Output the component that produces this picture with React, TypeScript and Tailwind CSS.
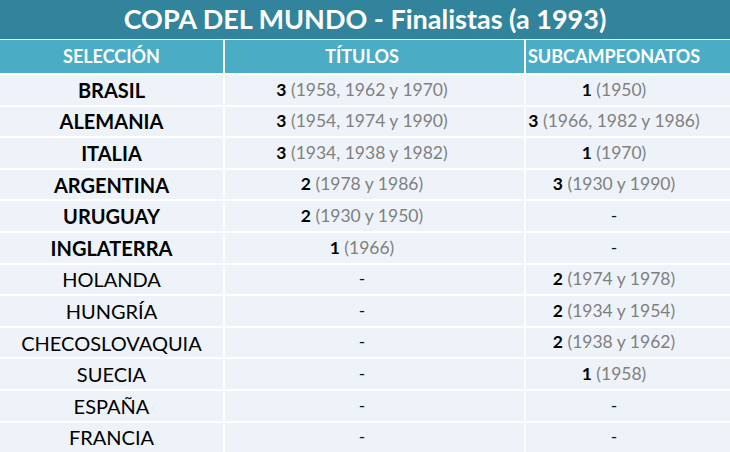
const rows: { name: string; bold: boolean; t: [string, string] | null; s: [string, string] | null }[] = [
  { name: "BRASIL", bold: true, t: ["3", "(1958, 1962 y 1970)"], s: ["1", "(1950)"] },
  { name: "ALEMANIA", bold: true, t: ["3", "(1954, 1974 y 1990)"], s: ["3", "(1966, 1982 y 1986)"] },
  { name: "ITALIA", bold: true, t: ["3", "(1934, 1938 y 1982)"], s: ["1", "(1970)"] },
  { name: "ARGENTINA", bold: true, t: ["2", "(1978 y 1986)"], s: ["3", "(1930 y 1990)"] },
  { name: "URUGUAY", bold: true, t: ["2", "(1930 y 1950)"], s: null },
  { name: "INGLATERRA", bold: true, t: ["1", "(1966)"], s: null },
  { name: "HOLANDA", bold: false, t: null, s: ["2", "(1974 y 1978)"] },
  { name: "HUNGRÍA", bold: false, t: null, s: ["2", "(1934 y 1954)"] },
  { name: "CHECOSLOVAQUIA", bold: false, t: null, s: ["2", "(1938 y 1962)"] },
  { name: "SUECIA", bold: false, t: null, s: ["1", "(1958)"] },
  { name: "ESPAÑA", bold: false, t: null, s: null },
  { name: "FRANCIA", bold: false, t: null, s: null },
];

function Cell({ v }: { v: [string, string] | null }) {
  if (!v) return <span className="text-[#1a1a1a]">-</span>;
  return (
    <span>
      <span className="font-bold text-black">{v[0]}</span>{" "}
      <span className="text-[#808080]">{v[1]}</span>
    </span>
  );
}

export default function App() {
  return (
    <div
      className="w-[730px] h-[452px] overflow-hidden bg-white"
      style={{ fontFamily: "Lato, 'Open Sans', sans-serif" }}
    >
      {/* title */}
      <div className="h-[39px] bg-[#31849b] flex items-center justify-center text-white font-bold text-[27px] leading-none pb-[2px]">
        COPA DEL MUNDO - Finalistas (a 1993)
      </div>
      <div className="mt-[1px] grid grid-cols-[223px_299px_206px] gap-x-[2px]">
        {/* header */}
        <div className="h-[33px] bg-[#4bacc6] text-white font-bold text-[18px] flex items-center justify-center">SELECCIÓN</div>
        <div className="h-[33px] bg-[#4bacc6] text-white font-bold text-[18px] flex items-center justify-center pr-[25px]">TÍTULOS</div>
        <div className="h-[33px] bg-[#4bacc6] text-white font-bold text-[18px] flex items-center justify-center pr-[30px]">SUBCAMPEONATOS</div>
      </div>
      <div className="mt-[2px] grid grid-cols-[223px_299px_206px] gap-x-[2px] gap-y-[2px] auto-rows-[29.6px]">
        {rows.map((r) => (
          <>
            <div
              key={r.name}
              className={`bg-[#eef3f9] flex items-center justify-center text-[20px] text-black ${r.bold ? "font-bold" : ""}`}
            >
              {r.name}
            </div>
            <div className="bg-[#eef3f9] flex items-center justify-center text-[17.5px] pr-[25px]">
              <Cell v={r.t} />
            </div>
            <div className="bg-[#eef3f9] flex items-center justify-center text-[17.5px] pr-[30px]">
              <Cell v={r.s} />
            </div>
          </>
        ))}
      </div>
    </div>
  );
}
